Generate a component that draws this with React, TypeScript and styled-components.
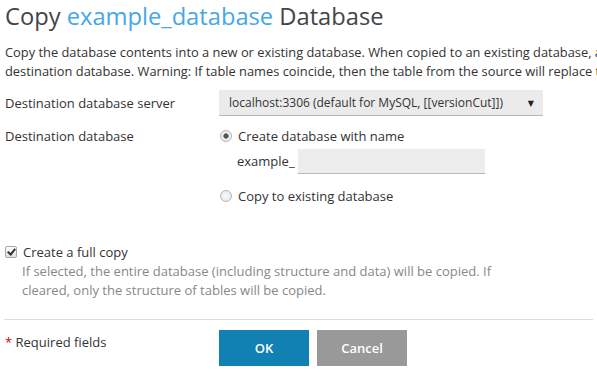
import React, { FC, useState } from 'react';
import styled, { createGlobalStyle } from 'styled-components';

const GlobalStyle = createGlobalStyle`
  body {
    margin: 0;
    background: #fff;
    font-family: 'Open Sans', 'DejaVu Sans', sans-serif;
    font-size: 13px;
    color: #333;
  }
`;

const servers = ['localhost:3306 (default for MySQL, [[versionCut]])'];

const App: FC = () => {
  const [mode, setMode] = useState<'new' | 'existing'>('new');
  const [fullCopy, setFullCopy] = useState<boolean>(true);
  const [name, setName] = useState<string>('');

  return (
    <>
      <GlobalStyle />
      <Page>
        <Title>
          Copy <DbName>example_database</DbName> Database
        </Title>
        <Intro>
          Copy the database contents into a new or existing database. When copied to an existing database, all data in the
          <br />
          destination database. Warning: If table names coincide, then the table from the source will replace the table in the
          destination.
        </Intro>

        <Row $top={9} $center>
          <Label>Destination database server</Label>
          <Field>
            <SelectBox>
              <SelectText>{servers[0]}</SelectText>
              <Arrow>▼</Arrow>
            </SelectBox>
          </Field>
        </Row>

        <Row $top={10}>
          <Label>Destination database</Label>
          <Field>
            <Choice>
              <Radio type="radio" checked={mode === 'new'} onChange={() => setMode('new')} />
              Create database with name
            </Choice>
            <NameLine>
              <Prefix>example_</Prefix>
              <TextInput value={name} onChange={(e) => setName(e.target.value)} />
            </NameLine>
            <Choice>
              <Radio type="radio" checked={mode === 'existing'} onChange={() => setMode('existing')} />
              Copy to existing database
            </Choice>
          </Field>
        </Row>

        <CopyOption>
          <Choice>
            <Checkbox type="checkbox" checked={fullCopy} onChange={() => setFullCopy(!fullCopy)} />
            Create a full copy
          </Choice>
          <Hint>
            If selected, the entire database (including structure and data) will be copied. If cleared, only the structure of
            tables will be copied.
          </Hint>
        </CopyOption>

        <Divider />

        <Footer>
          <Required>
            <Star>*</Star> Required fields
          </Required>
          <Buttons>
            <Button type="button" $primary>
              OK
            </Button>
            <Button type="button">Cancel</Button>
          </Buttons>
        </Footer>
      </Page>
    </>
  );
};

export default App;

const Page = styled.div`
  padding: 0 4px 0 5px;
  width: 597px;
  height: 374px;
  box-sizing: border-box;
  overflow: hidden;
`;

const Title = styled.h1`
  margin: 0;
  padding-top: 1px;
  font-size: 23.7px;
  font-weight: 400;
  line-height: 30px;
  color: #444;
  white-space: nowrap;
`;

const DbName = styled.span`
  color: #45a7e6;
`;

const Intro = styled.p`
  margin: 12px 0 0;
  font-size: 12.85px;
  line-height: 19px;
  white-space: nowrap;
`;

const Row = styled.div<{ $top?: number; $center?: boolean }>`
  display: flex;
  align-items: ${(p) => (p.$center ? 'center' : 'flex-start')};
  margin-top: ${(p) => p.$top ?? 11}px;
`;

const Label = styled.div`
  width: 214px;
  flex-shrink: 0;
  line-height: 20px;
`;

const Field = styled.div`
  display: flex;
  flex-direction: column;
`;

const SelectBox = styled.div`
  display: flex;
  align-items: center;
  justify-content: space-between;
  width: 324px;
  height: 26px;
  box-sizing: border-box;
  padding: 0 9px 0 10px;
  background: #ebebeb;
  border-bottom: 1px solid #b8b8b8;
  font-size: 12px;
`;

const SelectText = styled.span`
  white-space: nowrap;
`;

const Arrow = styled.span`
  font-size: 8px;
  color: #222;
`;

const Choice = styled.label`
  display: flex;
  align-items: center;
  gap: 6px;
  line-height: 20px;
`;

const Radio = styled.input`
  appearance: none;
  margin: 0 0 0 1px;
  width: 12px;
  height: 12px;
  border-radius: 50%;
  border: 1px solid #b5b5b5;
  background: radial-gradient(circle, #fafafa 0%, #e4e4e4 100%);
  box-sizing: border-box;
  &:checked {
    background: radial-gradient(circle, #555 0 2.3px, #f2f2f2 3px, #e2e2e2 100%);
  }
`;

const Checkbox = styled.input`
  appearance: none;
  margin: 0;
  width: 12px;
  height: 12px;
  border-radius: 2px;
  border: 1px solid #a8a8a8;
  background: linear-gradient(#fdfdfd, #e0e0e0);
  box-sizing: border-box;
  display: grid;
  place-items: center;
  &:checked::after {
    content: '';
    width: 3px;
    height: 6px;
    margin-top: -2px;
    border: solid #333;
    border-width: 0 2px 2px 0;
    transform: rotate(40deg);
  }
`;

const NameLine = styled.div`
  display: flex;
  align-items: center;
  margin: 3px 0 12px 18px;
  gap: 3px;
`;

const Prefix = styled.span`
  line-height: 25px;
`;

const TextInput = styled.input`
  width: 187px;
  height: 25px;
  box-sizing: border-box;
  border: none;
  border-bottom: 1px solid #b8b8b8;
  background: #ededed;
  padding: 0 6px;
  font: inherit;
  outline: none;
`;

const CopyOption = styled.div`
  margin-top: 36px;
  display: flex;
  flex-direction: column;
`;

const Hint = styled.div`
  margin: 0 0 0 17px;
  width: 518px;
  color: #888;
  line-height: 19px;
`;

const Divider = styled.hr`
  margin: 19px 0 0 -1px;
  border: none;
  border-top: 1px solid #ddd;
`;

const Footer = styled.div`
  display: flex;
  margin-top: 10px;
`;

const Required = styled.div`
  width: 214px;
  flex-shrink: 0;
  line-height: 25px;
`;

const Star = styled.span`
  color: #d00;
`;

const Buttons = styled.div`
  display: flex;
  gap: 8px;
`;

const Button = styled.button<{ $primary?: boolean }>`
  width: 90px;
  height: 36px;
  border: none;
  font: inherit;
  font-weight: 600;
  color: #fff;
  background: ${(p) => (p.$primary ? '#1180b3' : '#999')};
  cursor: pointer;
`;
